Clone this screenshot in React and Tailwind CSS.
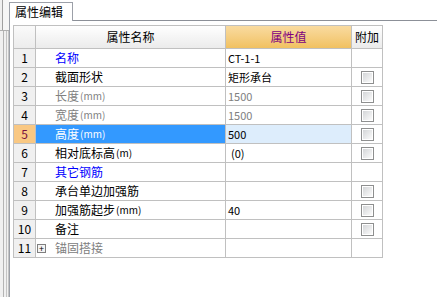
import React from 'react';

const rows = [
  { name: '名称', value: 'CT-1-1', nameColor: 'text-[#0000ff]', check: false },
  { name: '截面形状', value: '矩形承台', check: true },
  { name: '长度', unit: '(mm)', value: '1500', nameColor: 'text-[#808080]', valueColor: 'text-[#808080]', check: true },
  { name: '宽度', unit: '(mm)', value: '1500', nameColor: 'text-[#808080]', valueColor: 'text-[#808080]', check: true },
  { name: '高度', unit: '(mm)', value: '500', check: true, selected: true },
  { name: '相对底标高', unit: '(m)', value: '(0)', check: true, indentValue: true },
  { name: '其它钢筋', value: '', nameColor: 'text-[#0000ff]', check: false },
  { name: '承台单边加强筋', value: '', check: true },
  { name: '加强筋起步', unit: '(mm)', value: '40', check: true },
  { name: '备注', value: '', check: true },
  { name: '锚固搭接', value: '', nameColor: 'text-[#808080]', check: false, expander: true },
];

const font = { fontFamily: '"Noto Sans CJK SC", "Liberation Sans", sans-serif' };

const CheckBox = () => (
  <div className="w-[13px] h-[13px] border border-[#8e8f8f] bg-white p-[1px]">
    <div className="w-full h-full bg-gradient-to-br from-[#d4d6d8] to-[#fbfbfb]" />
  </div>
);

const Row = ({ idx, row }) => {
  const sel = row.selected;
  return (
    <div className="flex h-[19px]">
      <div
        className={`w-[22px] shrink-0 border-r border-b border-[#c0c0c0] flex items-center justify-center text-[12px] leading-none ${
          sel ? 'bg-[#f9c883] text-[#7a1040]' : 'bg-[#f0f0f0] text-black'
        }`}
      >
        {idx}
      </div>
      <div
        className={`w-[190px] shrink-0 border-r border-b border-[#c0c0c0] flex items-center text-[12px] leading-none ${
          sel ? 'bg-[#3399ff] text-white' : `bg-white ${row.nameColor || 'text-black'}`
        } ${row.expander ? 'pl-[1px]' : 'pl-[19px]'}`}
      >
        {row.expander && (
          <span className="w-[9px] h-[9px] border border-[#7f7f7f] bg-[#f4f4f4] flex items-center justify-center text-[9px] leading-none text-black mr-[9px]">
            +
          </span>
        )}
        <span>{row.name}</span>
        {row.unit && <span className="text-[10px] ml-[1px]">{row.unit}</span>}
      </div>
      <div
        className={`w-[126px] shrink-0 border-r border-b border-[#c0c0c0] flex items-center text-[11px] leading-none ${
          sel ? 'bg-[#ddedfc]' : 'bg-white'
        } ${row.valueColor || 'text-black'} ${row.indentValue ? 'pl-[5px]' : 'pl-[2px]'}`}
      >
        {row.value}
      </div>
      <div className="w-[31px] shrink-0 border-r border-b border-[#c0c0c0] bg-white flex items-center justify-center">
        {row.check && <CheckBox />}
      </div>
    </div>
  );
};

export default function App() {
  return (
    <div className="w-[437px] h-[297px] bg-white flex overflow-hidden" style={font}>
      {/* left docked strip */}
      <div className="w-[9px] shrink-0 flex flex-col">
        <div className="h-[31px] flex border-b border-[#b0b0b0]">
          <div className="w-[2px] bg-[#f0f0f0]" />
          <div className="w-[1px] bg-[#a0a0a0]" />
          <div className="flex-1 bg-[#f6f6f6]" />
        </div>
        <div className="flex-1 flex">
          <div className="w-[3px] bg-[#f0f0f0]" />
          <div className="w-[1px] bg-[#b4b4b4]" />
          <div className="w-[2px] bg-[#f0f0f0]" />
          <div className="w-[1px] bg-[#c4c4c4]" />
          <div className="w-[1px] bg-[#f0f0f0]" />
          <div className="w-[1px] bg-[#c4c4c4]" />
        </div>
      </div>

      <div className="flex-1 flex flex-col">
        {/* tab bar */}
        <div className="h-[21px] flex shrink-0">
          <div className="w-[64px] h-[19px] mt-[2px] border-l border-t border-r border-[#9ca0a8] bg-white flex items-center pl-[5px] text-[12px] leading-none text-black">
            属性编辑
          </div>
          <div className="flex-1 border-b border-[#8c9098]" />
        </div>

        {/* property grid */}
        <div className="flex-1 border-l border-[#9ca0a8] pl-[3px] pt-[4px]">
          <div className="w-[370px] border-l border-t border-[#c0c0c0]">
            <div className="flex h-[23px]">
              <div className="w-[22px] shrink-0 border-r border-b border-[#c0c0c0] bg-gradient-to-b from-[#fafafa] to-[#ececec]" />
              <div className="w-[190px] shrink-0 border-r border-b border-[#c0c0c0] bg-gradient-to-b from-white to-[#ebebeb] flex items-center justify-center text-[12px] leading-none text-black">
                属性名称
              </div>
              <div className="w-[126px] shrink-0 border-r border-b border-[#c0c0c0] bg-gradient-to-b from-[#f9dba0] to-[#f1c160] flex items-center justify-center text-[12px] leading-none text-[#800080]">
                属性值
              </div>
              <div className="w-[31px] shrink-0 border-r border-b border-[#c0c0c0] bg-gradient-to-b from-white to-[#ebebeb] flex items-center justify-center text-[12px] leading-none text-black">
                附加
              </div>
            </div>
            {rows.map((row, i) => (
              <Row key={i} idx={i + 1} row={row} />
            ))}
          </div>
        </div>
      </div>
    </div>
  );
}
